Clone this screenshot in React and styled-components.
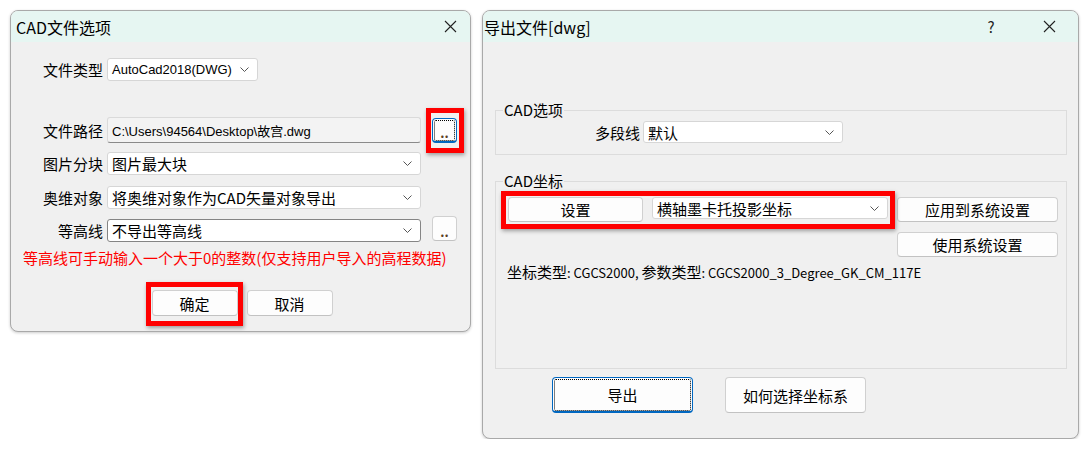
import styled, { createGlobalStyle } from "styled-components";

const GlobalStyle = createGlobalStyle`
  body {
    margin: 0;
    background: #ffffff;
    font-family: "Noto Sans CJK SC", "Noto Sans", sans-serif;
    color: #000;
  }
`;

const LATIN = `"Liberation Sans", "Noto Sans CJK SC", sans-serif`;

// 页面：两个对话框并排
const Page = styled.div`
  display: flex;
  align-items: flex-start;
  gap: 11px;
  padding: 10px 0 0 10px;
`;

const Dialog = styled.div`
  width: ${(p) => p.$w}px;
  box-sizing: border-box;
  border: 1px solid #a9a9a9;
  border-radius: 8px;
  background: #f0f0f0;
  overflow: hidden;
  box-shadow: 0 1px 3px rgba(0, 0, 0, 0.2);
`;

const TitleBar = styled.div`
  height: 31px;
  display: flex;
  align-items: center;
  background: #e6f6f2;
  padding-left: ${(p) => p.$pad}px;
  font-size: 16px;
`;

const TitleText = styled.span`
  flex: 1;
`;

const TitleIcon = styled.span`
  width: ${(p) => p.$w}px;
  display: flex;
  justify-content: center;
  font-size: 15px;
  color: #222;
`;

const CloseIcon = () => (
  <svg width="13" height="13" viewBox="0 0 13 13">
    <path d="M1 1L12 12M12 1L1 12" stroke="#222" strokeWidth="1.1" />
  </svg>
);

const Chevron = () => (
  <svg width="9" height="5" viewBox="0 0 9 5">
    <polyline points="0.5,0.5 4.5,4.5 8.5,0.5" fill="none" stroke="#555" strokeWidth="1" />
  </svg>
);

// ---- 左侧：CAD文件选项 ----
const LeftBody = styled.div`
  padding: 16px 0 15px 0;
  font-size: 15px;
`;

const Row = styled.div`
  display: flex;
  align-items: center;
  margin-top: ${(p) => p.$top || 0}px;
`;

const Label = styled.div`
  width: ${(p) => p.$w}px;
  box-sizing: border-box;
  padding-right: ${(p) => p.$gap || 4}px;
  text-align: right;
  white-space: nowrap;
`;

const Combo = styled.div`
  width: ${(p) => p.$w}px;
  height: ${(p) => p.$h || 23}px;
  box-sizing: border-box;
  display: flex;
  align-items: center;
  justify-content: space-between;
  padding: 0 8px 0 4px;
  background: #ffffff;
  border: 1px solid ${(p) => (p.$edit ? "#858585" : "#d6d6d6")};
  border-radius: 3px;
  white-space: nowrap;
  font-size: ${(p) => p.$fs || 15}px;
  ${(p) => p.$latin && `font-family: ${LATIN};`}
`;

const PathInput = styled.div`
  width: 314px;
  height: 26px;
  box-sizing: border-box;
  display: flex;
  align-items: center;
  padding-left: 4px;
  background: #f3f3f3;
  border: 1px solid #dadada;
  border-bottom-color: #8a8a8a;
  border-radius: 3px;
  font-family: ${LATIN};
  font-size: 13px;
`;

const Btn = styled.button`
  width: ${(p) => p.$w}px;
  height: ${(p) => p.$h}px;
  box-sizing: border-box;
  margin: 0;
  margin-top: ${(p) => p.$mt || 0}px;
  padding: 0;
  font-family: inherit;
  font-size: inherit;
  color: #000;
  background: #fdfdfd;
  border: 1px solid ${(p) => (p.$focus ? "#0067c0" : "#d0d0d0")};
  border-bottom: ${(p) => (p.$focus ? "2px solid #0067c0" : "1px solid #c2c2c2")};
  border-radius: 4px;
  outline: ${(p) => (p.$focus ? "1px dotted #000" : "none")};
  outline-offset: -3px;
`;

const SideBtn = styled(Btn)`
  margin-left: 11px;
  font-size: 13px;
  font-weight: bold;
  line-height: 1;
  padding-top: 6px;
  color: #5a3d1e;
`;

const Hint = styled.div`
  margin-top: 6px;
  padding-left: 12px;
  line-height: 20px;
  color: #ff0000;
  white-space: nowrap;
`;

const Actions = styled.div`
  display: flex;
  justify-content: ${(p) => (p.$start ? "flex-start" : "center")};
  gap: ${(p) => p.$gap}px;
  margin-top: ${(p) => p.$top}px;
  padding-left: ${(p) => p.$pad || 0}px;
`;

// 红色标注框，叠在控件上方
const Mark = styled.div`
  position: relative;
  display: flex;
  align-items: flex-start;

  &::after {
    content: "";
    position: absolute;
    inset: ${(p) => p.$inset};
    border: 5px solid #ff0000;
    box-shadow: 1px 2px 4px rgba(0, 0, 0, 0.35);
    pointer-events: none;
  }
`;

// ---- 右侧：导出文件[dwg] ----
const RightBody = styled.div`
  padding: 60px 11px 25px 12px;
  font-size: 15px;
`;

const Group = styled.fieldset`
  margin: ${(p) => p.$top || 0}px 0 0 0;
  padding: 0;
  border: 1px solid #dcdcdc;
  min-width: 0;

  legend {
    margin-left: 7px;
    padding: 0 1px;
    line-height: 16px;
  }
`;

const GroupBody = styled.div`
  padding: ${(p) => p.$pad};
`;

const CoordRow = styled.div`
  display: flex;
  align-items: flex-start;
  gap: 9px;
`;

const SideColumn = styled.div`
  display: flex;
  flex-direction: column;
  gap: 10px;
`;

const Info = styled.div`
  margin-top: 7px;
  margin-left: -1px;
  line-height: 16px;
  font-size: 13px;
  white-space: nowrap;
`;

const Han = styled.span`
  font-size: 15px;
`;

const LeftDialog = () => (
  <Dialog $w={461}>
    <TitleBar $pad={5}>
      <TitleText>CAD文件选项</TitleText>
      <TitleIcon $w={40}>
        <CloseIcon />
      </TitleIcon>
    </TitleBar>
    <LeftBody>
      <Row>
        <Label $w={96}>文件类型</Label>
        <Combo $w={151} $fs={13} $latin>
          AutoCad2018(DWG) <Chevron />
        </Combo>
      </Row>
      <Row $top={36}>
        <Label $w={96}>文件路径</Label>
        <PathInput>C:\Users\94564\Desktop\故宫.dwg</PathInput>
        <Mark $inset="-10px -7px -10px 5px">
          <SideBtn $w={25} $h={25} $focus>..</SideBtn>
        </Mark>
      </Row>
      <Row $top={9}>
        <Label $w={96}>图片分块</Label>
        <Combo $w={314}>
          图片最大块 <Chevron />
        </Combo>
      </Row>
      <Row $top={11}>
        <Label $w={96}>奥维对象</Label>
        <Combo $w={314}>
          将奥维对象作为CAD矢量对象导出 <Chevron />
        </Combo>
      </Row>
      <Row $top={10}>
        <Label $w={96}>等高线</Label>
        <Combo $w={314} $edit>
          不导出等高线 <Chevron />
        </Combo>
        <SideBtn $w={25} $h={25} $mt={-4}>..</SideBtn>
      </Row>
      <Hint>等高线可手动输入一个大于0的整数(仅支持用户导入的高程数据)</Hint>
      <Actions $gap={9} $top={22} $pad={3}>
        <Mark $inset="-8px -5px -10px -6px">
          <Btn $w={86} $h={26}>确定</Btn>
        </Mark>
        <Btn $w={86} $h={26}>取消</Btn>
      </Actions>
    </LeftBody>
  </Dialog>
);

const RightDialog = () => (
  <Dialog $w={597}>
    <TitleBar $pad={1}>
      <TitleText>导出文件[dwg]</TitleText>
      <TitleIcon $w={30}>?</TitleIcon>
      <TitleIcon $w={30} style={{ marginLeft: 28, marginRight: 14 }}>
        <CloseIcon />
      </TitleIcon>
    </TitleBar>
    <RightBody>
      <Group>
        <legend>CAD选项</legend>
        <GroupBody $pad="3px 0 11px 0">
          <Row>
            <Label $w={147} $gap={3}>多段线</Label>
            <Combo $w={200} $h={22}>
              默认 <Chevron />
            </Combo>
          </Row>
        </GroupBody>
      </Group>
      <Group $top={18}>
        <legend>CAD坐标</legend>
        <GroupBody $pad="8px 0 87px 12px">
          <CoordRow>
            <Mark $inset="-6px -7px -7px -7px" style={{ gap: 9 }}>
              <Btn $w={135} $h={25}>设置</Btn>
              <Combo $w={236} $h={22}>
                横轴墨卡托投影坐标 <Chevron />
              </Combo>
            </Mark>
            <SideColumn>
              <Btn $w={161} $h={25}>应用到系统设置</Btn>
              <Btn $w={161} $h={25}>使用系统设置</Btn>
            </SideColumn>
          </CoordRow>
          <Info>
            <Han>坐标类型</Han>: CGCS2000, <Han>参数类型</Han>: CGCS2000_3_Degree_GK_CM_117E
          </Info>
        </GroupBody>
      </Group>
      <Actions $start $gap={32} $top={8} $pad={57}>
        <Btn $w={141} $h={36} $focus>导出</Btn>
        <Btn $w={141} $h={36}>如何选择坐标系</Btn>
      </Actions>
    </RightBody>
  </Dialog>
);

export default function App() {
  return (
    <>
      <GlobalStyle />
      <Page>
        <LeftDialog />
        <RightDialog />
      </Page>
    </>
  );
}
